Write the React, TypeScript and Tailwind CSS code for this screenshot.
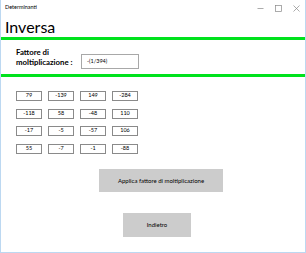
import React from "react";

const cells = [
  ["79", "-139", "149", "-284"],
  ["-118", "58", "-48", "110"],
  ["-17", "-5", "-57", "106"],
  ["55", "-7", "-1", "-88"],
];

export default function App() {
  return (
    <div
      className="w-[306px] h-[253px] bg-white border-x border-b border-[#bcd8f1] flex flex-col overflow-hidden text-black"
      style={{ fontFamily: 'Lato, "Open Sans", sans-serif' }}
    >
      <div className="h-[16px] flex items-center justify-between pl-[4px] pr-[5px]">
        <span className="text-[5.5px] leading-none">Determinanti</span>
        <div className="flex items-center gap-[11px]">
          <svg width="7" height="7" viewBox="0 0 7 7">
            <line x1="0.5" y1="3.5" x2="6.5" y2="3.5" stroke="#888" strokeWidth="0.7" />
          </svg>
          <svg width="7" height="7" viewBox="0 0 7 7">
            <rect x="0.5" y="0.5" width="6" height="6" fill="none" stroke="#888" strokeWidth="0.7" />
          </svg>
          <svg width="7" height="7" viewBox="0 0 7 7">
            <line x1="0.5" y1="0.5" x2="6.5" y2="6.5" stroke="#888" strokeWidth="0.7" />
            <line x1="6.5" y1="0.5" x2="0.5" y2="6.5" stroke="#888" strokeWidth="0.7" />
          </svg>
        </div>
      </div>
      <div className="h-[21px] pl-[4px] text-[16px] leading-[21px] font-normal">Inversa</div>
      <div className="h-[3px] bg-[#00e21c]" />
      <div className="h-[34px] flex items-center pl-[15px]">
        <div className="w-[65px] text-[7.8px] font-bold leading-[10px] whitespace-nowrap">
          Fattore di
          <br />
          moltiplicazione :
        </div>
        <div className="mt-[9px] w-[58px] h-[15px] border-[1.5px] border-[#a8a8a8] flex items-center pl-[5px] text-[5.5px]">
          -(1/394)
        </div>
      </div>
      <div className="h-[3px] bg-[#00e21c]" />
      <div className="pl-[15px] pt-[14px] grid grid-cols-[26px_26px_26px_26px] gap-x-[6px] gap-y-[7.5px]">
        {cells.flat().map((v, i) => (
          <div
            key={i}
            className="h-[10px] border border-[#8a8a8a] flex items-center justify-center text-[5.5px] leading-none"
          >
            {v}
          </div>
        ))}
      </div>
      <div className="ml-[98px] mt-[15px] w-[124px] h-[23px] bg-[#cccccc] flex items-center justify-center text-[6px]">
        Applica fattore di moltiplicazione
      </div>
      <div className="ml-[122px] mt-[21px] w-[68px] h-[24px] bg-[#cccccc] flex items-center justify-center text-[6px]">
        Indietro
      </div>
    </div>
  );
}
